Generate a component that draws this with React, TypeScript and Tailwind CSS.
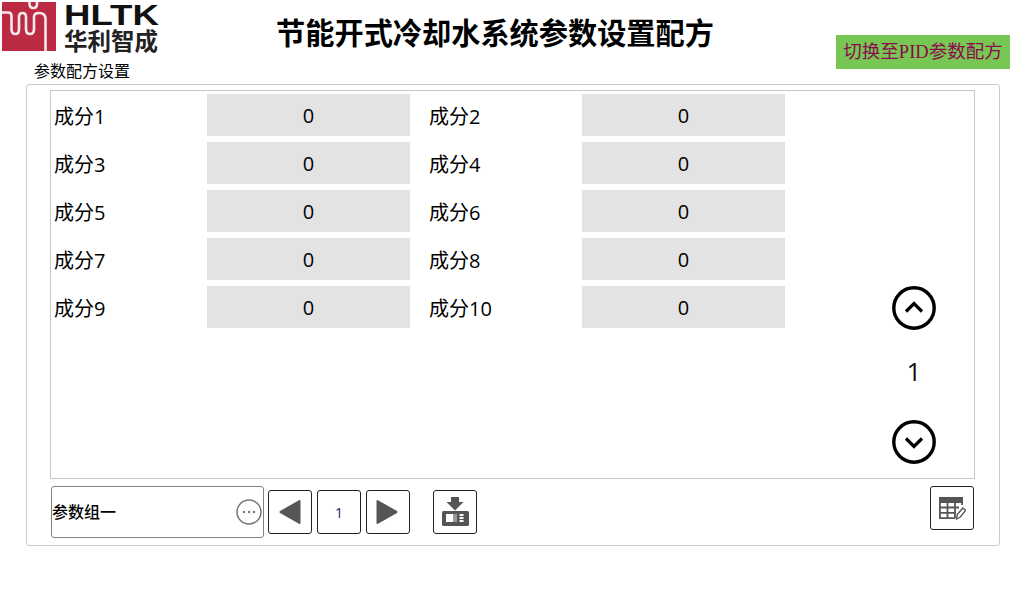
const SANS = "font-['Open_Sans','Noto_Sans_CJK_SC',sans-serif]";

function Row({ a, b }: { a: string; b: string }) {
  return (
    <div className="flex h-[42px] items-center">
      <div className="w-[156px] pl-[3px] pt-[3px] text-[20px] leading-[42px] text-black">{a}</div>
      <div className="flex h-[42px] w-[203px] items-center justify-center bg-[#e3e3e3] pt-[1px] text-[20px] text-black">0</div>
      <div className="ml-[19px] w-[153px] pt-[3px] text-[20px] leading-[42px] text-black">{b}</div>
      <div className="flex h-[42px] w-[203px] items-center justify-center bg-[#e3e3e3] pt-[1px] text-[20px] text-black">0</div>
    </div>
  );
}

function CircleBtn({ down }: { down?: boolean }) {
  return (
    <svg width="44" height="44" viewBox="0 0 44 44" fill="none" stroke="#000">
      <circle cx="22" cy="22" r="20.2" strokeWidth="3.4" />
      <path d={down ? "M14 18.5 L22 26.5 L30 18.5" : "M14 25.5 L22 17.5 L30 25.5"} strokeWidth="3.2" />
    </svg>
  );
}

function IconBox({ children, className = "" }: { children: React.ReactNode; className?: string }) {
  return (
    <div className={`flex h-[44px] w-[44px] items-center justify-center rounded-[3px] border border-[#222] bg-white ${className}`}>
      {children}
    </div>
  );
}

export default function App() {
  return (
    <div className={`h-[600px] w-[1024px] overflow-hidden bg-white ${SANS}`}>
      <div className="flex h-[84px]">
        <div className="ml-[2px] mt-[2px] flex h-[53px] w-[160px] shrink-0">
          <svg width="54" height="49" viewBox="0 0 54 49" className="shrink-0">
            <rect width="54" height="49" fill="#bc2b43" />
            <path d="M0 10.5 H6 Q9.5 10.5 9.5 14 V27 Q9.5 32 13.5 32 Q17 32 17 27 V15 Q17 11 20.5 11 Q24 11 24 15 V27 Q24 32 28 32 Q32 32 32 27 V15 Q32 11 37 11 Q43.5 11 43.5 17 V49" fill="none" stroke="#f5e8ea" strokeWidth="2.6" />
            <path d="M27.5 -1 V2 Q27.5 6 31.5 6 Q35 6 35 2 V-1" fill="none" stroke="#f5e8ea" strokeWidth="2.6" />
          </svg>
          <div className="ml-[8px] flex w-[97px] flex-col">
            <div className="origin-left scale-x-[1.22] font-['Liberation_Sans',sans-serif] text-[30px] font-bold leading-[26px] text-[#111]">HLTK</div>
            <div className="mt-[1px] whitespace-nowrap text-[23.5px] font-bold leading-[24px] text-[#222]">华利智成</div>
          </div>
        </div>
        <div className="ml-[112px] mt-[14px] w-[442px] shrink-0 whitespace-nowrap text-center text-[29.2px] font-bold leading-[38px] text-black">
          节能开式冷却水系统参数设置配方
        </div>
        <div className="ml-[120px] mt-[35px] flex h-[34px] w-[174px] shrink-0 items-center justify-center whitespace-nowrap bg-[#78c653] font-['Liberation_Serif','Noto_Sans_CJK_SC',serif] text-[18.5px] font-normal leading-none text-[#8a0a4e]">
          切换至PID参数配方
        </div>
      </div>
      <div className="relative mx-[26px] h-[462px] w-[974px] rounded-[3px] border border-[#cccccc]">
        <div className="absolute left-[7px] top-[-24px] text-[16px] leading-[20px] text-black">参数配方设置</div>
        <div className="ml-[23px] mt-[5px] flex h-[389px] w-[925px] border border-[#c6c6c6]">
          <div className="flex w-[763px] flex-col gap-[6px] pt-[3px]">
            <Row a="成分1" b="成分2" />
            <Row a="成分3" b="成分4" />
            <Row a="成分5" b="成分6" />
            <Row a="成分7" b="成分8" />
            <Row a="成分9" b="成分10" />
          </div>
          <div className="ml-[78px] flex w-[44px] flex-col items-center pt-[195px]">
            <CircleBtn />
            <div className="mt-[20px] h-[42px] text-[26px] leading-[42px] text-[#111]">1</div>
            <div className="mt-[28px]"><CircleBtn down /></div>
          </div>
        </div>
        <div className="mt-[7px] flex items-start pl-[24px]">
          <div className="flex h-[52px] w-[213px] shrink-0 items-center justify-between rounded-[3px] border border-[#808080] pr-[1px]">
            <span className="text-[16px] font-medium text-black">参数组一</span>
            <svg width="26" height="26" viewBox="0 0 26 26" fill="none">
              <circle cx="13" cy="13" r="12" stroke="#777" strokeWidth="1.5" />
              <circle cx="8" cy="13" r="1.2" fill="#777" />
              <circle cx="13" cy="13" r="1.2" fill="#777" />
              <circle cx="18" cy="13" r="1.2" fill="#777" />
            </svg>
          </div>
          <IconBox className="ml-[4px] mt-[4px]">
            <svg width="24" height="26" viewBox="0 0 24 26"><path d="M22.5 2 V24 Q22.5 25.5 21 24.8 L2 14 Q1 13 2 12 L21 1.2 Q22.5 0.5 22.5 2 Z" fill="#555" /></svg>
          </IconBox>
          <IconBox className="ml-[5px] mt-[4px] text-[14px] text-[#0b2a55]">1</IconBox>
          <IconBox className="ml-[5px] mt-[4px] pr-[3px]">
            <svg width="24" height="26" viewBox="0 0 24 26"><path d="M1.5 2 V24 Q1.5 25.5 3 24.8 L22 14 Q23 13 22 12 L3 1.2 Q1.5 0.5 1.5 2 Z" fill="#555" /></svg>
          </IconBox>
          <IconBox className="ml-[23px] mt-[4px]">
            <svg width="28" height="30" viewBox="0 0 28 30">
              <path d="M10 0 H18 V5 H22.5 L14 13.5 L5.5 5 H10 Z" fill="#555" />
              <rect x="1" y="14" width="27" height="15" rx="1.5" fill="#555" />
              <rect x="5" y="17" width="11" height="8" fill="#fff" />
              <rect x="12" y="17" width="4" height="8" fill="#999" />
              <rect x="18.5" y="17" width="4" height="2" fill="#fff" />
              <rect x="18.5" y="20" width="4" height="2" fill="#fff" />
              <rect x="18.5" y="23" width="4" height="2" fill="#fff" />
            </svg>
          </IconBox>
          <IconBox className="ml-[453px]">
            <svg width="28" height="24" viewBox="0 0 28 24">
              <rect x="1" y="1" width="24" height="6" fill="#555" />
              <path d="M1.9 6 V22.1 H17 M1.9 11.5 H21 M1.9 16.8 H17 M9.5 6 V22 M17 6 V22 M24.1 6 V9" fill="none" stroke="#555" strokeWidth="1.8" />
              <path d="M18.5 23 L19.3 18.5 L24.8 12 L27.6 14.4 L22.3 21 Z" fill="#fff" stroke="#555" strokeWidth="1.4" />
            </svg>
          </IconBox>
        </div>
      </div>
    </div>
  );
}
